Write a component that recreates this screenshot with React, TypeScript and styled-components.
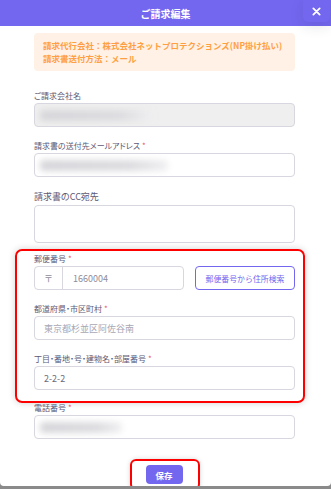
import React from "react";
import styled, { createGlobalStyle } from "styled-components";

const GlobalStyle = createGlobalStyle`
  html, body {
    margin: 0;
    padding: 0;
    background: #8a8a8a;
    font-family: "Noto Sans CJK JP", "Noto Sans", sans-serif;
  }
  * {
    box-sizing: border-box;
  }
`;

const Modal = styled.div`
  width: 331px;
  height: 486px;
  background: #ffffff;
  border-radius: 0 0 4px 4px;
  overflow: hidden;
  position: relative;
`;

const Header = styled.div`
  height: 26px;
  background: #7367f0;
  display: flex;
  align-items: center;
  justify-content: center;
  color: #ffffff;
  font-size: 10px;
  font-weight: 700;
`;

const CloseButton = styled.button`
  position: absolute;
  top: 0;
  right: 1px;
  width: 27px;
  height: 22px;
  border: none;
  border-radius: 0 0 5px 5px;
  background: #7367f0;
  box-shadow: 0 4px 14px rgba(34, 41, 47, 0.12);
  display: flex;
  align-items: center;
  justify-content: center;
  padding: 0;
`;

const Body = styled.div`
  padding: 7px 36px 0 34px;
  display: flex;
  flex-direction: column;
`;

const Alert = styled.div`
  background: #fff1e5;
  border-radius: 4px;
  padding: 6px 9px;
  color: #ff9f43;
  font-size: 8.5px;
  font-weight: 700;
  line-height: 13px;
  margin-bottom: 19px;
`;

const Field = styled.div`
  display: flex;
  flex-direction: column;
  margin-bottom: 13px;
  &:last-child {
    margin-bottom: 0;
  }
`;

const Label = styled.label<{ $large?: boolean }>`
  font-size: ${(p) => (p.$large ? "9px" : "8px")};
  line-height: ${(p) => (p.$large ? "14px" : "12px")};
  color: #5e5873;
  margin-bottom: 1px;
  font-feature-settings: "palt";
`;

const Required = styled.span`
  color: #ea5455;
  margin-left: 2px;
`;

const Input = styled.div<{ $disabled?: boolean }>`
  height: 24px;
  border: 1px solid #d8d6de;
  border-radius: 4px;
  background: ${(p) => (p.$disabled ? "#efefef" : "#ffffff")};
  display: flex;
  align-items: center;
  padding: 0 9px;
  font-size: 9px;
  color: #6e6b7b;
  overflow: hidden;
`;

const Placeholder = styled.span`
  color: #a9a7b4;
`;

const TextArea = styled.div`
  height: 38px;
  border: 1px solid #d8d6de;
  border-radius: 4px;
  background: #ffffff;
`;

const Redacted = styled.span<{ $width: number }>`
  display: block;
  width: ${(p) => p.$width}px;
  height: 11px;
  margin-left: -4px;
  border-radius: 4px;
  background: linear-gradient(90deg, #d6d6da 0%, #dcdce0 70%, #f0f0f2 100%);
  filter: blur(3px);
`;

const Highlight = styled.div`
  margin: -7px -10px -1px -19px;
  padding: 2px 8px 11px 17px;
  border: 2px solid #ff0000;
  border-radius: 7px;
  box-shadow: 0 0 7px rgba(0, 0, 0, 0.18);
  display: flex;
  flex-direction: column;
`;

const PostalRow = styled.div`
  display: flex;
  gap: 11px;
`;

const PostalGroup = styled.div`
  width: 150px;
  height: 24px;
  border: 1px solid #d8d6de;
  border-radius: 4px;
  display: flex;
  align-items: stretch;
  font-size: 9px;
  color: #8e8c99;
`;

const PostalPrefix = styled.span`
  width: 28px;
  border-right: 1px solid #d8d6de;
  display: flex;
  align-items: center;
  justify-content: center;
`;

const PostalValue = styled.span`
  display: flex;
  align-items: center;
  padding-left: 10px;
`;

const SearchButton = styled.button`
  flex: 1;
  height: 24px;
  border: 1px solid #7367f0;
  border-radius: 4px;
  background: #ffffff;
  color: #7367f0;
  font-family: inherit;
  font-size: 7.9px;
  padding: 0;
`;

const Footer = styled.div`
  display: flex;
  justify-content: center;
  margin-top: 7px;
`;

const SaveFrame = styled.div`
  border: 2px solid #ff0000;
  border-radius: 6px;
  padding: 4px 15px 4px 14px;
  box-shadow: 0 0 5px rgba(0, 0, 0, 0.15);
`;

const SaveButton = styled.button`
  display: block;
  width: 37px;
  height: 19px;
  border: none;
  border-radius: 4px;
  background: #7367f0;
  color: #ffffff;
  font-family: inherit;
  font-size: 8.5px;
  font-weight: 700;
  padding: 0;
`;

export default function App() {
  return (
    <>
      <GlobalStyle />
      <Modal>
        <Header>ご請求編集</Header>
        <CloseButton aria-label="close">
          <svg width="9" height="9" viewBox="0 0 10 10">
            <path d="M1.5 1.5 L8.5 8.5 M8.5 1.5 L1.5 8.5" stroke="#fff" strokeWidth="2" strokeLinecap="round" />
          </svg>
        </CloseButton>
        <Body>
          <Alert>
            請求代行会社：株式会社ネットプロテクションズ(NP掛け払い)
            <br />
            請求書送付方法：メール
          </Alert>

          <Field>
            <Label>ご請求会社名</Label>
            <Input $disabled>
              <Redacted $width={114} />
            </Input>
          </Field>

          <Field>
            <Label>
              請求書の送付先メールアドレス<Required>*</Required>
            </Label>
            <Input>
              <Redacted $width={128} />
            </Input>
          </Field>

          <Field>
            <Label $large>請求書のCC宛先</Label>
            <TextArea />
          </Field>

          <Highlight>
            <Field>
              <Label>
                郵便番号<Required>*</Required>
              </Label>
              <PostalRow>
                <PostalGroup>
                  <PostalPrefix>〒</PostalPrefix>
                  <PostalValue>1660004</PostalValue>
                </PostalGroup>
                <SearchButton>郵便番号から住所検索</SearchButton>
              </PostalRow>
            </Field>

            <Field>
              <Label>
                都道府県・市区町村<Required>*</Required>
              </Label>
              <Input>
                <Placeholder>東京都杉並区阿佐谷南</Placeholder>
              </Input>
            </Field>

            <Field>
              <Label>
                丁目・番地・号・建物名・部屋番号<Required>*</Required>
              </Label>
              <Input>2-2-2</Input>
            </Field>
          </Highlight>

          <Field>
            <Label>
              電話番号<Required>*</Required>
            </Label>
            <Input>
              <Redacted $width={82} />
            </Input>
          </Field>

          <Footer>
            <SaveFrame>
              <SaveButton>保存</SaveButton>
            </SaveFrame>
          </Footer>
        </Body>
      </Modal>
    </>
  );
}
